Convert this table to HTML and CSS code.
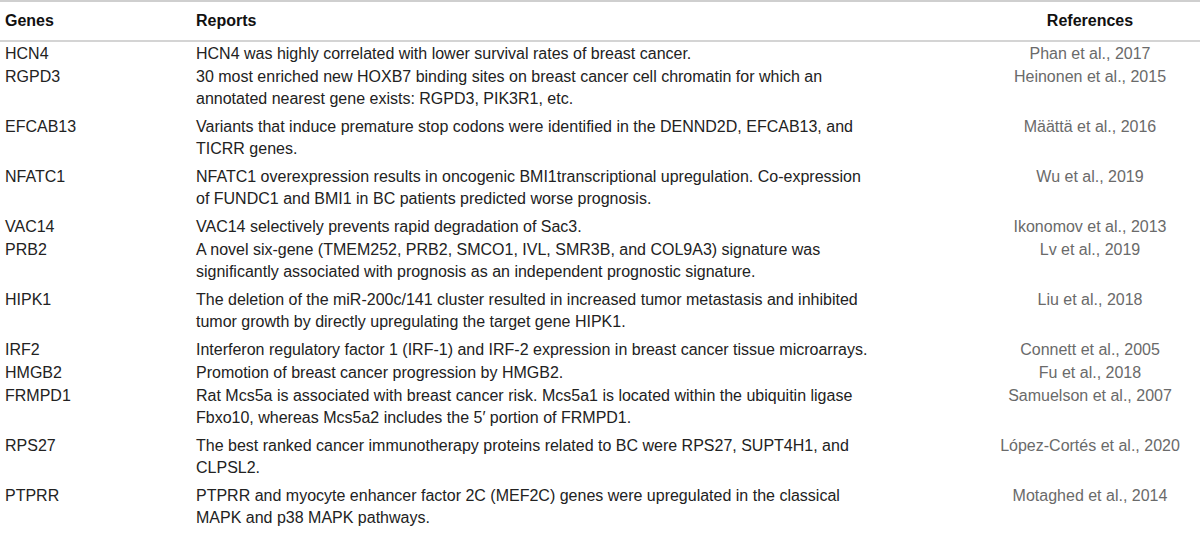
FILE: index.html
```html
<!DOCTYPE html>
<html lang="en">
<head>
<meta charset="utf-8">
<title>Genes and reports</title>
<link rel="stylesheet" href="styles.css">
</head>
<body>
<table class="tbl">
  <colgroup>
    <col class="c-gene">
    <col class="c-rep">
    <col class="c-ref">
  </colgroup>
  <thead>
    <tr>
      <th class="gene">Genes</th>
      <th class="rep">Reports</th>
      <th class="ref">References</th>
    </tr>
  </thead>
  <tbody>
    <tr class="single"><td class="gene">HCN4</td><td class="rep">HCN4 was highly correlated with lower survival rates of breast cancer.</td><td class="ref">Phan et al., 2017</td></tr>
    <tr><td class="gene">RGPD3</td><td class="rep">30 most enriched new HOXB7 binding sites on breast cancer cell chromatin for which an<br>annotated nearest gene exists: RGPD3, PIK3R1, etc.</td><td class="ref">Heinonen et al., 2015</td></tr>
    <tr><td class="gene">EFCAB13</td><td class="rep">Variants that induce premature stop codons were identified in the DENND2D, EFCAB13, and<br>TICRR genes.</td><td class="ref">Määttä et al., 2016</td></tr>
    <tr><td class="gene">NFATC1</td><td class="rep">NFATC1 overexpression results in oncogenic BMI1transcriptional upregulation. Co-expression<br>of FUNDC1 and BMI1 in BC patients predicted worse prognosis.</td><td class="ref">Wu et al., 2019</td></tr>
    <tr class="single"><td class="gene">VAC14</td><td class="rep">VAC14 selectively prevents rapid degradation of Sac3.</td><td class="ref">Ikonomov et al., 2013</td></tr>
    <tr><td class="gene">PRB2</td><td class="rep">A novel six-gene (TMEM252, PRB2, SMCO1, IVL, SMR3B, and COL9A3) signature was<br>significantly associated with prognosis as an independent prognostic signature.</td><td class="ref">Lv et al., 2019</td></tr>
    <tr><td class="gene">HIPK1</td><td class="rep">The deletion of the miR-200c/141 cluster resulted in increased tumor metastasis and inhibited<br>tumor growth by directly upregulating the target gene HIPK1.</td><td class="ref">Liu et al., 2018</td></tr>
    <tr class="single"><td class="gene">IRF2</td><td class="rep">Interferon regulatory factor 1 (IRF-1) and IRF-2 expression in breast cancer tissue microarrays.</td><td class="ref">Connett et al., 2005</td></tr>
    <tr class="single"><td class="gene">HMGB2</td><td class="rep">Promotion of breast cancer progression by HMGB2.</td><td class="ref">Fu et al., 2018</td></tr>
    <tr><td class="gene">FRMPD1</td><td class="rep">Rat Mcs5a is associated with breast cancer risk. Mcs5a1 is located within the ubiquitin ligase<br>Fbxo10, whereas Mcs5a2 includes the 5′ portion of FRMPD1.</td><td class="ref">Samuelson et al., 2007</td></tr>
    <tr><td class="gene">RPS27</td><td class="rep">The best ranked cancer immunotherapy proteins related to BC were RPS27, SUPT4H1, and<br>CLPSL2.</td><td class="ref">López-Cortés et al., 2020</td></tr>
    <tr><td class="gene">PTPRR</td><td class="rep">PTPRR and myocyte enhancer factor 2C (MEF2C) genes were upregulated in the classical<br>MAPK and p38 MAPK pathways.</td><td class="ref">Motaghed et al., 2014</td></tr>
  </tbody>
</table>
</body>
</html>
```
FILE: styles.css
```css
html, body {
  margin: 0;
  padding: 0;
  background: #ffffff;
}
body {
  font-family: "Liberation Sans", Arial, sans-serif;
  color: #222222;
}
.tbl {
  width: 1200px;
  border-collapse: collapse;
  table-layout: fixed;
  border-top: 2px solid #cfcfcf;
}
.c-gene { width: 196px; }
.c-rep { width: 784px; }
.c-ref { width: 220px; }
th {
  font-size: 16px;
  font-weight: bold;
  color: #111111;
  height: 38px;
  padding: 0;
  text-align: left;
  vertical-align: middle;
  border-bottom: 2px solid #d4d4d4;
}
td {
  font-size: 16px;
  line-height: 22px;
  padding: 0 0 6px;
  vertical-align: top;
  white-space: nowrap;
}
.single td {
  padding-top: 0;
  padding-bottom: 1px;
}
.gene { padding-left: 5px; }
th.ref, td.ref { text-align: center; }
td.ref { color: #6a6a6a; }
tbody tr:first-child td { padding-top: 1px; }
```
